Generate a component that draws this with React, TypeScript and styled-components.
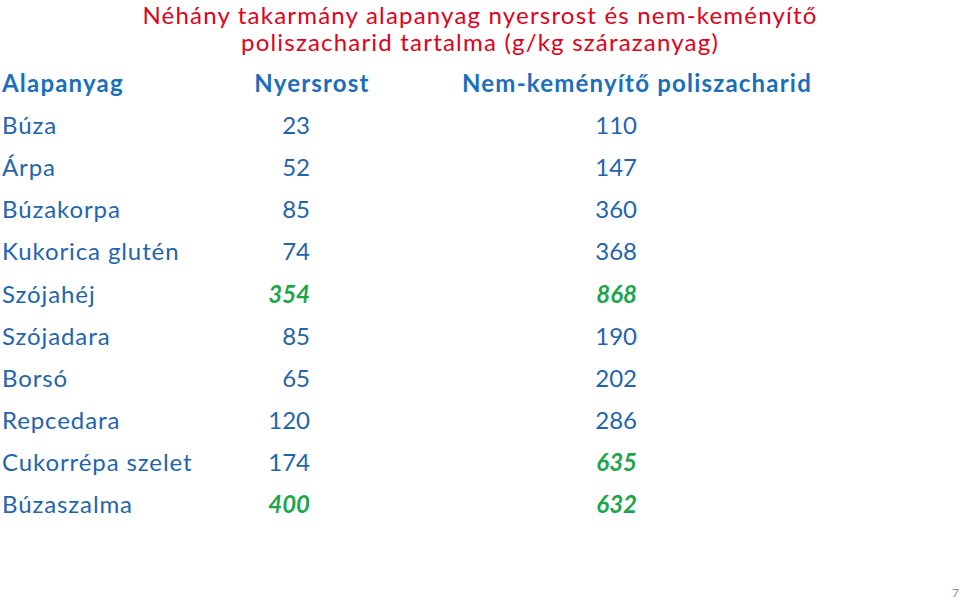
import React from "react";
import styled, { createGlobalStyle } from "styled-components";

const Global = createGlobalStyle`
  html, body { margin: 0; padding: 0; background: #ffffff; }
  body { font-family: Lato, "Open Sans", sans-serif; }
`;

const Slide = styled.div`
  position: relative;
  width: 960px;
  height: 600px;
  overflow: hidden;
  background: #ffffff;
  display: flex;
  flex-direction: column;
`;

const Title = styled.h1`
  margin: 0;
  padding-top: 1px;
  text-align: center;
  font-family: Lato, sans-serif;
  font-weight: 400;
  font-size: 24px;
  line-height: 27px;
  color: #e2001a;
  letter-spacing: 1.2px;
`;

const Table = styled.div`
  margin-top: 6px;
  display: grid;
  grid-template-columns: 250px 124px 526px;
  grid-auto-rows: 42.2px;
  align-items: center;
`;

const Head = styled.div<{ $align: "left" | "center" }>`
  font-family: Lato, sans-serif;
  font-weight: 700;
  font-size: 24px;
  color: #1a6fbd;
  text-align: ${(p) => p.$align};
  padding-left: ${(p) => (p.$align === "left" ? "2px" : "0")};
  white-space: nowrap;
  letter-spacing: 1.2px;
`;

const Name = styled.div`
  font-family: Lato, sans-serif;
  font-size: 24px;
  color: #1f65ae;
  padding-left: 2px;
  white-space: nowrap;
  letter-spacing: 0.9px;
`;

const Num = styled.div<{ $pr: number; $hi?: boolean }>`
  font-family: Lato, sans-serif;
  font-size: 24px;
  text-align: right;
  padding-right: ${(p) => p.$pr}px;
  color: ${(p) => (p.$hi ? "#1ca64c" : "#1f65ae")};
  font-weight: ${(p) => (p.$hi ? 700 : 400)};
  font-style: ${(p) => (p.$hi ? "italic" : "normal")};
`;

const PageNo = styled.div`
  position: absolute;
  right: 1px;
  bottom: 0px;
  font-family: Lato, sans-serif;
  font-size: 12px;
  color: #8c8c8c;
`;

type Row = { name: string; a: number; b: number; ha?: boolean; hb?: boolean };

const rows: Row[] = [
  { name: "Búza", a: 23, b: 110 },
  { name: "Árpa", a: 52, b: 147 },
  { name: "Búzakorpa", a: 85, b: 360 },
  { name: "Kukorica glutén", a: 74, b: 368 },
  { name: "Szójahéj", a: 354, b: 868, ha: true, hb: true },
  { name: "Szójadara", a: 85, b: 190 },
  { name: "Borsó", a: 65, b: 202 },
  { name: "Repcedara", a: 120, b: 286 },
  { name: "Cukorrépa szelet", a: 174, b: 635, hb: true },
  { name: "Búzaszalma", a: 400, b: 632, ha: true, hb: true },
];

export default function App() {
  return (
    <>
      <Global />
      <Slide>
        <Title>
          Néhány takarmány alapanyag nyersrost és nem-keményítő
          <br />
          poliszacharid tartalma (g/kg szárazanyag)
        </Title>
        <Table>
          <Head $align="left">Alapanyag</Head>
          <Head $align="center">Nyersrost</Head>
          <Head $align="center">Nem-keményítő poliszacharid</Head>
          {rows.map((r) => (
            <React.Fragment key={r.name}>
              <Name>{r.name}</Name>
              <Num $pr={64} $hi={r.ha}>{r.a}</Num>
              <Num $pr={263} $hi={r.hb}>{r.b}</Num>
            </React.Fragment>
          ))}
        </Table>
        <PageNo>7</PageNo>
      </Slide>
    </>
  );
}
